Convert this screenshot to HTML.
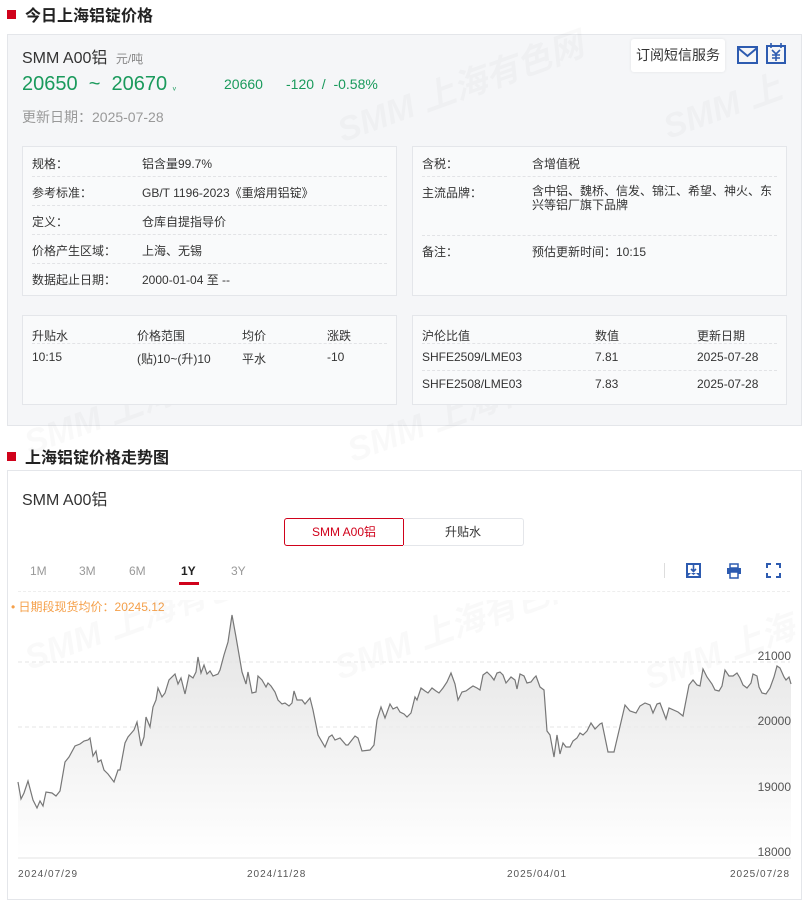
<!DOCTYPE html>
<html><head><meta charset="utf-8">
<style>
*{margin:0;padding:0;box-sizing:border-box}
body{width:807px;height:890px;background:#fff;font-family:"Liberation Sans","Noto Sans CJK SC",sans-serif;color:#333;position:relative;overflow:hidden}
.a{position:absolute;white-space:nowrap}
.h{font-size:16px;font-weight:bold;color:#222}
.sq{position:absolute;width:9px;height:9px;background:#d0021b}
.box{position:absolute;border:1px solid #e4e6ea}
.t{font-size:12px;color:#333}
.dl{position:absolute;height:0;border-top:1px dashed #e2e3e6}
.wm{position:absolute;font-size:34px;font-weight:bold;color:rgba(0,0,0,0.022);transform:rotate(-20deg);white-space:nowrap;font-style:italic}
</style></head><body>
<div class="sq" style="left:7px;top:10px"></div>
<div class="a h" style="left:25px;top:2px">今日上海铝锭价格</div>

<div class="box" style="left:7px;top:34px;width:795px;height:392px;background:#f5f6f8"></div>
<div class="wm" style="left:330px;top:60px">SMM 上海有色网</div>
<div class="wm" style="left:660px;top:80px">SMM 上</div>
<div class="wm" style="left:20px;top:390px">SMM 上海</div>
<div class="wm" style="left:340px;top:380px">SMM 上海有色网</div>
<div class="a" style="left:22px;top:44px;font-size:16px;color:#333">SMM A00铝 <span style="font-size:12px;color:#888;margin-left:4px">元/吨</span></div>
<div class="a" style="left:22px;top:73px;font-size:20px;color:#1a9a5c">20650 &nbsp;~&nbsp; 20670 <span style="font-size:10px">ᵥ</span></div>
<div class="a" style="left:224px;top:76px;font-size:14px;color:#1a9a5c">20660</div>
<div class="a" style="left:286px;top:76px;font-size:14px;color:#1a9a5c">-120 &nbsp;/&nbsp; -0.58%</div>
<div class="a" style="left:22px;top:107px;font-size:14px;color:#999">更新日期：2025-07-28</div>
<div class="a" style="left:631px;top:39px;width:94px;height:33px;background:#fff;border-radius:3px;box-shadow:0 0 3px rgba(0,0,0,0.08);font-size:14px;line-height:33px;text-align:center;color:#333">订阅短信服务</div>
<svg class="a" style="left:737px;top:46px" width="21" height="18" viewBox="0 0 21 18"><rect x="1" y="1" width="19" height="16" fill="none" stroke="#2d5bb0" stroke-width="2"/><path d="M1 2 L10.5 10 L20 2" fill="none" stroke="#2d5bb0" stroke-width="2"/></svg>
<svg class="a" style="left:766px;top:43px" width="20" height="21" viewBox="0 0 20 21"><rect x="1" y="3" width="18" height="17" fill="none" stroke="#2d5bb0" stroke-width="2"/><path d="M5 0v5M15 0v5M6 7l4 4 4-4M10 11v7M6 12h8M6 15h8" fill="none" stroke="#2d5bb0" stroke-width="1.6"/></svg>

<div class="box" style="left:22px;top:146px;width:375px;height:150px;background:#f9fafb"></div>
<div class="dl" style="left:32px;top:176px;width:355px"></div>
<div class="dl" style="left:32px;top:205px;width:355px"></div>
<div class="dl" style="left:32px;top:234px;width:355px"></div>
<div class="dl" style="left:32px;top:263px;width:355px"></div>
<div class="a t" style="left:32px;top:155px">规格：</div><div class="a t" style="left:142px;top:155px">铝含量99.7%</div>
<div class="a t" style="left:32px;top:184px">参考标准：</div><div class="a t" style="left:142px;top:184px">GB/T 1196-2023《重熔用铝锭》</div>
<div class="a t" style="left:32px;top:213px">定义：</div><div class="a t" style="left:142px;top:213px">仓库自提指导价</div>
<div class="a t" style="left:32px;top:242px">价格产生区域：</div><div class="a t" style="left:142px;top:242px">上海、无锡</div>
<div class="a t" style="left:32px;top:271px">数据起止日期：</div><div class="a t" style="left:142px;top:271px">2000-01-04 至 --</div>

<div class="box" style="left:412px;top:146px;width:375px;height:150px;background:#f9fafb"></div>
<div class="dl" style="left:422px;top:176px;width:355px"></div>
<div class="dl" style="left:422px;top:235px;width:355px"></div>
<div class="a t" style="left:422px;top:155px">含税：</div><div class="a t" style="left:532px;top:155px">含增值税</div>
<div class="a t" style="left:422px;top:184px">主流品牌：</div><div class="a t" style="left:532px;top:184px;line-height:14px">含中铝、魏桥、信发、锦江、希望、神火、东<br>兴等铝厂旗下品牌</div>
<div class="a t" style="left:422px;top:243px">备注：</div><div class="a t" style="left:532px;top:243px">预估更新时间：10:15</div>

<div class="box" style="left:22px;top:315px;width:375px;height:90px;background:#f9fafb"></div>
<div class="dl" style="left:32px;top:343px;width:355px"></div>
<div class="a t" style="left:32px;top:327px">升贴水</div><div class="a t" style="left:137px;top:327px">价格范围</div><div class="a t" style="left:242px;top:327px">均价</div><div class="a t" style="left:327px;top:327px">涨跌</div>
<div class="a t" style="left:32px;top:350px">10:15</div><div class="a t" style="left:137px;top:350px">(贴)10~(升)10</div><div class="a t" style="left:242px;top:350px">平水</div><div class="a t" style="left:327px;top:350px">-10</div>

<div class="box" style="left:412px;top:315px;width:375px;height:90px;background:#f9fafb"></div>
<div class="dl" style="left:422px;top:343px;width:355px"></div>
<div class="dl" style="left:422px;top:370px;width:355px"></div>
<div class="a t" style="left:422px;top:327px">沪伦比值</div><div class="a t" style="left:595px;top:327px">数值</div><div class="a t" style="left:697px;top:327px">更新日期</div>
<div class="a t" style="left:422px;top:350px">SHFE2509/LME03</div><div class="a t" style="left:595px;top:350px">7.81</div><div class="a t" style="left:697px;top:350px">2025-07-28</div>
<div class="a t" style="left:422px;top:377px">SHFE2508/LME03</div><div class="a t" style="left:595px;top:377px">7.83</div><div class="a t" style="left:697px;top:377px">2025-07-28</div>

<div class="sq" style="left:7px;top:452px"></div>
<div class="a h" style="left:25px;top:444px">上海铝锭价格走势图</div>
<div class="box" style="left:7px;top:470px;width:795px;height:430px;background:#fff"></div>
<div class="a" style="left:22px;top:486px;font-size:16px;color:#333">SMM A00铝</div>
<div class="a" style="left:284px;top:518px;width:120px;height:28px;border:1px solid #d0021b;border-radius:3px 0 0 3px;font-size:12px;color:#d0021b;text-align:center;line-height:26px">SMM A00铝</div>
<div class="a" style="left:403px;top:518px;width:121px;height:28px;border:1px solid #e4e6ea;border-left:none;border-radius:0 3px 3px 0;font-size:12px;color:#333;text-align:center;line-height:26px">升贴水</div>
<div class="a" style="left:30px;top:564px;font-size:12px;color:#999">1M</div>
<div class="a" style="left:79px;top:564px;font-size:12px;color:#999">3M</div>
<div class="a" style="left:129px;top:564px;font-size:12px;color:#999">6M</div>
<div class="a" style="left:181px;top:564px;font-size:12px;color:#222;font-weight:bold">1Y</div>
<div class="a" style="left:179px;top:582px;width:20px;height:3px;background:#d0021b"></div>
<div class="a" style="left:231px;top:564px;font-size:12px;color:#999">3Y</div>
<div class="a" style="left:664px;top:563px;width:1px;height:15px;background:#ddd"></div>
<svg class="a" style="left:686px;top:563px" width="15" height="15" viewBox="0 0 15 15"><rect x="0" y="0" width="15" height="15" fill="#2d5bb0"/><rect x="2" y="2" width="11" height="8" fill="#fff"/><path d="M7.5 2v6M5 6l2.5 2.5L10 6" stroke="#2d5bb0" stroke-width="1.6" fill="none"/><path d="M2 13l3-3 2.5 2 2.5-2 3 3z" fill="#fff"/></svg>
<svg class="a" style="left:726px;top:563px" width="16" height="16" viewBox="0 0 16 16"><rect x="4" y="1" width="8" height="4" fill="none" stroke="#2d5bb0" stroke-width="1.5"/><rect x="1" y="5" width="14" height="6" fill="#2d5bb0"/><rect x="4" y="9" width="8" height="6" fill="#fff" stroke="#2d5bb0" stroke-width="1.5"/></svg>
<svg class="a" style="left:766px;top:563px" width="15" height="15" viewBox="0 0 15 15"><path d="M1 5V1h4M10 1h4v4M14 10v4h-4M5 14H1v-4" fill="none" stroke="#2d5bb0" stroke-width="2"/></svg>
<div class="dl" style="left:18px;top:591px;width:772px;border-color:#eee"></div>
<div class="a" style="left:11px;top:598px;font-size:12px;color:#f5a04a">• 日期段现货均价：20245.12</div>

<svg class="a" style="left:0;top:600px" width="807" height="290" viewBox="0 600 807 290">
<defs><linearGradient id="g" x1="0" y1="0" x2="0" y2="1"><stop offset="0" stop-color="#dcdcdc"/><stop offset="1" stop-color="#ffffff"/></linearGradient></defs>
<text x="30" y="670" transform="rotate(-20 30 670)" font-size="34" font-weight="bold" font-style="italic" fill="rgba(0,0,0,0.025)" font-family="Liberation Sans,Noto Sans CJK SC,sans-serif">SMM 上海有色网</text>
<text x="340" y="680" transform="rotate(-20 340 680)" font-size="34" font-weight="bold" font-style="italic" fill="rgba(0,0,0,0.025)" font-family="Liberation Sans,Noto Sans CJK SC,sans-serif">SMM 上海有色网</text>
<text x="650" y="690" transform="rotate(-20 650 690)" font-size="34" font-weight="bold" font-style="italic" fill="rgba(0,0,0,0.025)" font-family="Liberation Sans,Noto Sans CJK SC,sans-serif">SMM 上海</text>
<line x1="18" y1="662" x2="790" y2="662" stroke="#e6e6e6" stroke-dasharray="4,3"/>
<line x1="18" y1="727" x2="790" y2="727" stroke="#e6e6e6" stroke-dasharray="4,3"/>
<polygon fill="url(#g)" opacity="0.8" points="18,858 18,782 21,799 24,793 28,781 33,800 37,808 40,801 43,806 46,792 52,793 56,796 60,791 65,762 69,757 75,746 80,744 84,741 88,740 90,738 93,756 96,751 98,762 101,760 104,770 108,774 114,782 118,770 120,770 125,743 128,737 134,730 137,722 141,746 144,737 146,717 150,727 153,707 156,700 158,688 162,697 165,693 169,680 175,674 178,684 181,678 185,694 189,675 193,678 196,672 198,657 201,673 204,665 207,674 210,671 213,676 218,674 220,670 224,655 228,642 232,615 236,637 242,672 246,684 248,672 252,693 256,692 258,676 262,680 266,687 268,683 271,686 275,692 278,700 282,704 285,703 289,706 292,703 294,691 297,700 302,700 305,704 310,698 313,710 318,735 325,747 329,737 332,735 335,740 340,738 346,745 348,745 355,736 358,738 362,751 370,750 374,745 377,720 381,707 385,718 390,704 393,709 397,707 400,712 404,714 407,717 411,713 415,697 417,700 421,688 425,691 428,693 432,688 436,691 439,693 443,688 447,682 451,673 455,684 458,700 462,692 466,691 470,688 473,686 477,688 480,690 483,675 487,672 491,676 494,680 497,673 500,672 503,675 506,683 511,677 515,680 517,689 520,674 524,676 527,683 531,682 534,678 536,676 540,687 544,690 547,731 550,735 554,757 557,735 560,754 563,743 566,747 570,747 573,741 577,738 580,733 583,735 587,731 591,723 595,729 600,724 602,723 608,752 614,752 625,705 630,711 636,713 640,706 645,703 650,705 653,713 657,704 660,703 663,711 666,719 669,708 678,712 683,716 689,685 693,680 697,685 700,686 703,669 707,677 712,684 715,690 719,691 722,686 725,670 729,676 733,676 737,673 740,678 743,685 747,688 751,683 753,674 757,676 759,687 762,693 766,694 770,688 774,677 777,666 780,668 784,677 786,680 789,677 791,684 791,858"/>
<polyline fill="none" stroke="#777" stroke-width="1.2" points="18,782 21,799 24,793 28,781 33,800 37,808 40,801 43,806 46,792 52,793 56,796 60,791 65,762 69,757 75,746 80,744 84,741 88,740 90,738 93,756 96,751 98,762 101,760 104,770 108,774 114,782 118,770 120,770 125,743 128,737 134,730 137,722 141,746 144,737 146,717 150,727 153,707 156,700 158,688 162,697 165,693 169,680 175,674 178,684 181,678 185,694 189,675 193,678 196,672 198,657 201,673 204,665 207,674 210,671 213,676 218,674 220,670 224,655 228,642 232,615 236,637 242,672 246,684 248,672 252,693 256,692 258,676 262,680 266,687 268,683 271,686 275,692 278,700 282,704 285,703 289,706 292,703 294,691 297,700 302,700 305,704 310,698 313,710 318,735 325,747 329,737 332,735 335,740 340,738 346,745 348,745 355,736 358,738 362,751 370,750 374,745 377,720 381,707 385,718 390,704 393,709 397,707 400,712 404,714 407,717 411,713 415,697 417,700 421,688 425,691 428,693 432,688 436,691 439,693 443,688 447,682 451,673 455,684 458,700 462,692 466,691 470,688 473,686 477,688 480,690 483,675 487,672 491,676 494,680 497,673 500,672 503,675 506,683 511,677 515,680 517,689 520,674 524,676 527,683 531,682 534,678 536,676 540,687 544,690 547,731 550,735 554,757 557,735 560,754 563,743 566,747 570,747 573,741 577,738 580,733 583,735 587,731 591,723 595,729 600,724 602,723 608,752 614,752 625,705 630,711 636,713 640,706 645,703 650,705 653,713 657,704 660,703 663,711 666,719 669,708 678,712 683,716 689,685 693,680 697,685 700,686 703,669 707,677 712,684 715,690 719,691 722,686 725,670 729,676 733,676 737,673 740,678 743,685 747,688 751,683 753,674 757,676 759,687 762,693 766,694 770,688 774,677 777,666 780,668 784,677 786,680 789,677 791,684"/>
<line x1="18" y1="858" x2="791" y2="858" stroke="#e3e3e3"/>
<g font-size="12" fill="#555" font-family="Liberation Sans,sans-serif" text-anchor="end">
<text x="791" y="660">21000</text><text x="791" y="725">20000</text><text x="791" y="791">19000</text><text x="791" y="856">18000</text>
</g>
<g font-size="10" fill="#555" font-family="Liberation Sans,sans-serif" letter-spacing="1">
<text x="18" y="877">2024/07/29</text><text x="247" y="877">2024/11/28</text><text x="507" y="877">2025/04/01</text><text x="730" y="877">2025/07/28</text>
</g>
</svg>
</body></html>
